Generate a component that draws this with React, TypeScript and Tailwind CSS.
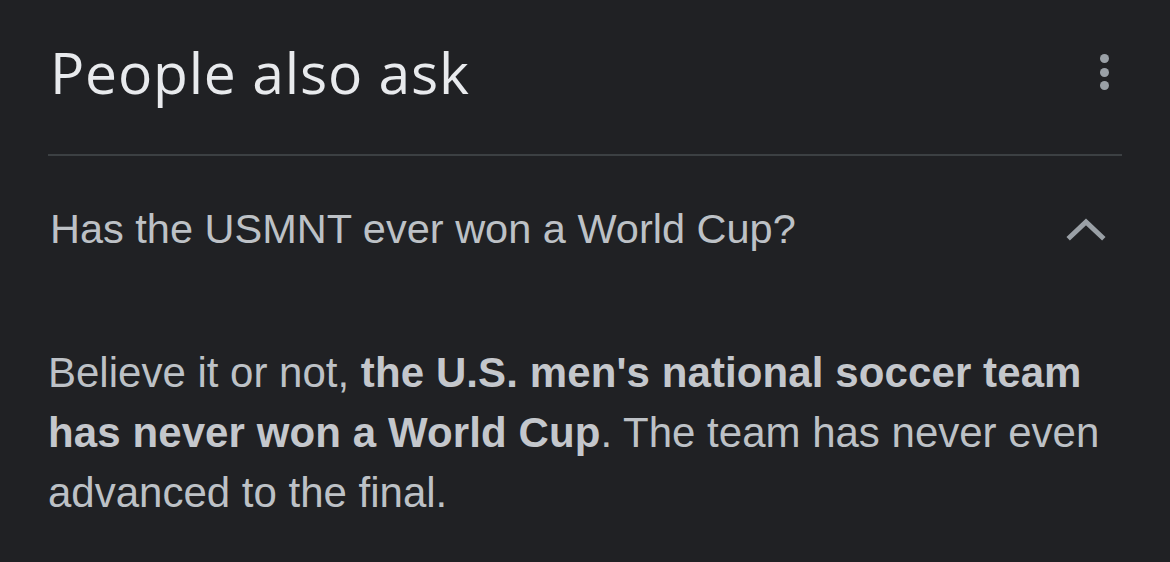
import React from "react";

const Dots = () => (
  <div className="flex flex-col items-center gap-[4.5px] mt-[54px] mr-[13px]">
    <span className="block w-[9px] h-[9px] rounded-full bg-[#9aa0a6]"></span>
    <span className="block w-[9px] h-[9px] rounded-full bg-[#9aa0a6]"></span>
    <span className="block w-[9px] h-[9px] rounded-full bg-[#9aa0a6]"></span>
  </div>
);

const ChevronUp = () => (
  <svg width="40" height="24" viewBox="0 0 40 24" className="mr-[16px]">
    <path
      d="M4 20 L20 5 L36 20"
      fill="none"
      stroke="#9aa0a6"
      strokeWidth="5"
      strokeLinecap="square"
    />
  </svg>
);

const App = () => {
  return (
    <div className="w-full h-[562px] bg-[#202124] overflow-hidden">
      <div className="px-[48px]">
        <div className="h-[154px] flex justify-between items-start">
          <div
            className="mt-[44px] ml-[2px] text-[57px] leading-[57px] font-medium text-[#e8eaed] tracking-[0.8px]"
            style={{ fontFamily: '"Open Sans", sans-serif' }}
          >
            People also ask
          </div>
          <Dots />
        </div>
        <div className="h-[2px] bg-[#3c4043]"></div>

        <div className="h-[146px] flex items-center justify-between">
          <div
            className="text-[41.5px] leading-[42px] text-[#bdc1c6] ml-[2px]"
            style={{ fontFamily: '"Liberation Sans", Arial, sans-serif' }}
          >
            Has the USMNT ever won a World Cup?
          </div>
          <ChevronUp />
        </div>

        <div
          className="mt-[41px] text-[42px] leading-[60px] text-[#bdc1c6] pr-[14px]"
          style={{ fontFamily: '"Liberation Sans", Arial, sans-serif' }}
        >
          Believe it or not,{" "}
          <span className="font-bold text-[#c4c7cc] tracking-[0.1px]">
            the U.S. men's national soccer team has never won a World Cup
          </span>
          . The team has never even advanced to the final.
        </div>
      </div>
    </div>
  );
};

export default App;
